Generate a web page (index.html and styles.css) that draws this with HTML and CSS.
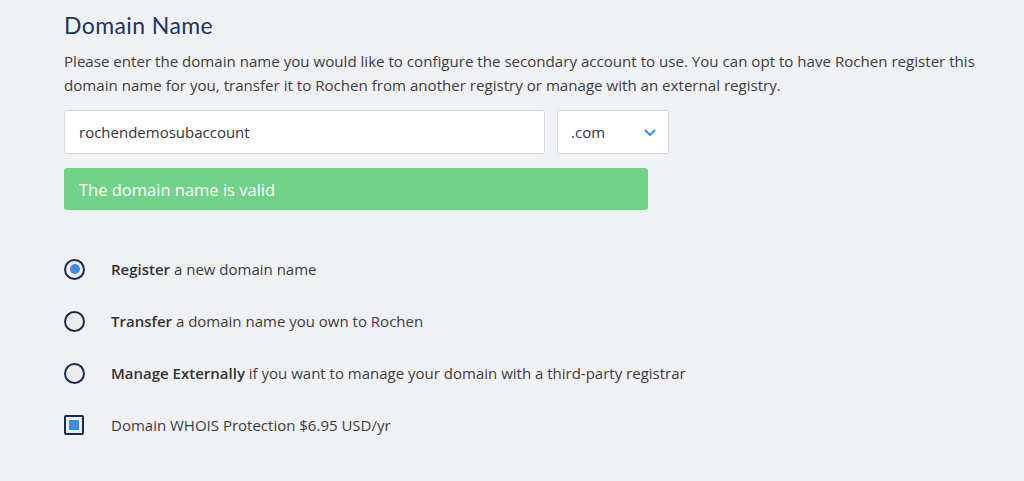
FILE: index.html
```html
<!DOCTYPE html>
<html>
<head>
<meta charset="utf-8">
<link rel="stylesheet" href="styles.css">
</head>
<body>
<div class="section">
  <h2 class="title">Domain Name</h2>
  <p class="desc">Please enter the domain name you would like to configure the secondary account to use. You can opt to have Rochen register this domain name for you, transfer it to Rochen from another registry or manage with an external registry.</p>
  <div class="domain-row">
    <div class="input">rochendemosubaccount</div>
    <div class="select"><span>.com</span>
      <svg class="chev" width="12" height="8" viewBox="0 0 12 8"><path d="M1.5 1.5 L6 6 L10.5 1.5" fill="none" stroke="#3b8de0" stroke-width="2" stroke-linecap="round" stroke-linejoin="round"/></svg>
    </div>
  </div>
  <div class="alert">The domain name is valid</div>
  <ul class="options">
    <li class="opt"><span class="radio checked"></span><span><b>Register</b> a new domain name</span></li>
    <li class="opt"><span class="radio"></span><span><b>Transfer</b> a domain name you own to Rochen</span></li>
    <li class="opt"><span class="radio"></span><span><b>Manage Externally</b> if you want to manage your domain with a third-party registrar</span></li>
    <li class="opt"><span class="check"></span><span>Domain WHOIS Protection $6.95 USD/yr</span></li>
  </ul>
</div>
</body>
</html>
```
FILE: styles.css
```css
html, body { margin: 0; padding: 0; }
body {
  background: #f0f1f5;
  font-family: "Open Sans", "Liberation Sans", sans-serif;
  color: #3a3a3a;
  width: 1024px;
  height: 481px;
  overflow: hidden;
}
.section { padding: 11px 0 0 64px; width: 940px; }
.title {
  margin: 0;
  font-family: "Lato", "Open Sans", sans-serif;
  font-weight: 400;
  font-size: 23px;
  letter-spacing: 0.4px;
  color: #1c355e;
  line-height: 28px;
}
.desc {
  margin: 10px 0 0 0;
  font-size: 15.1px;
  line-height: 24px;
  color: #3d3d3d;
}
.domain-row { display: flex; gap: 12px; margin-top: 13px; }
.input {
  width: 481px; height: 44px; box-sizing: border-box;
  background: #fff; border: 1px solid #d5d9df; border-radius: 3px;
  padding: 0 14px; display: flex; align-items: center;
  font-size: 15px; color: #333;
}
.select {
  width: 112px; height: 44px; box-sizing: border-box;
  background: #fff; border: 1px solid #d5d9df; border-radius: 3px;
  padding: 0 12px 0 13px; display: flex; align-items: center; justify-content: space-between;
  font-size: 15px; color: #333;
}
.chev { margin-top: 1px; }
.alert {
  width: 584px; height: 42px; box-sizing: border-box; margin-top: 14px;
  background: #72d28a; border-radius: 3px; color: #fff;
  font-size: 16.5px; padding: 0 15px; display: flex; align-items: center;
}
.options { list-style: none; margin: 48px 0 0 0; padding: 0; display: flex; flex-direction: column; gap: 30px; }
.opt { display: flex; align-items: center; height: 22px; font-size: 15px; color: #3d3d3d; }
.opt b { font-weight: 600; color: #333; }
.radio {
  width: 21px; height: 21px; box-sizing: border-box; border-radius: 50%;
  border: 2.5px solid #1b2a4a; background: #ececed; margin-right: 26px; flex: none;
  display: flex; align-items: center; justify-content: center;
}
.radio.checked::after { content: ""; width: 10px; height: 10px; border-radius: 50%; background: #3b8de0; }
.check {
  width: 20px; height: 20px; box-sizing: border-box; border-radius: 2px;
  border: 2.5px solid #1b2a4a; background: #ececed; margin-right: 27px; flex: none;
  display: flex; align-items: center; justify-content: center;
}
.check::after { content: ""; width: 10px; height: 10px; background: #3b8de0; }
```
